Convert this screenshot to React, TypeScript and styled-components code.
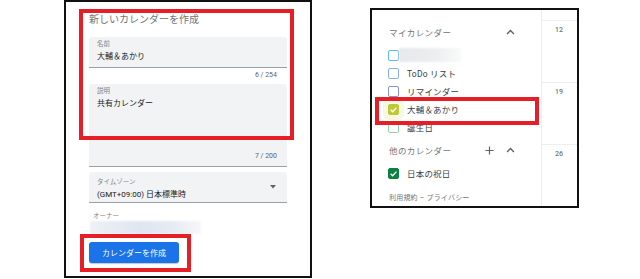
import * as React from 'react'
import styled, { createGlobalStyle } from 'styled-components'

const GlobalStyle = createGlobalStyle`
  html, body {
    margin: 0;
    padding: 0;
    background: #fff;
  }
  body {
    font-family: Roboto, "Noto Sans CJK JP", sans-serif;
    color: #3c4043;
  }
`

export const Stage = styled.div`
  width: 640px;
  height: 279px;
  box-sizing: border-box;
  padding-left: 64px;
  display: flex;
  align-items: flex-start;
  overflow: hidden;
`

export const FormPanel = styled.div`
  position: relative;
  width: 248px;
  height: 278px;
  box-sizing: border-box;
  border: 2px solid #111;
  padding: 11px 0 0 23px;
`

export const Title = styled.div`
  font-size: 10px;
  line-height: 14px;
  color: #70757a;
  margin-bottom: 10px;
`

export const Form = styled.div`
  width: 198px;
  display: flex;
  flex-direction: column;
`

export const Field = styled.div<{ $h: number; $pt?: number; $mt?: number }>`
  height: ${p => p.$h}px;
  margin-top: ${p => p.$mt ?? 0}px;
  box-sizing: border-box;
  background: #f1f3f4;
  border-radius: 3px 3px 0 0;
  border-bottom: 1px solid #9aa0a6;
  padding: ${p => p.$pt ?? 3}px 8px 0;
  display: flex;
  flex-direction: column;
`

export const FieldLabel = styled.div<{ $mt?: number }>`
  font-size: 6.5px;
  line-height: 8px;
  margin-top: ${p => p.$mt ?? 0}px;
  color: #80868b;
`

export const FieldValue = styled.div`
  font-size: 8px;
  line-height: 11px;
  margin-top: 3px;
  color: #202124;
`

export const Counter = styled.div<{ $inside?: boolean }>`
  font-size: 7px;
  line-height: 8px;
  color: #5f6368;
  text-align: right;
  padding-right: ${p => (p.$inside ? 2 : 10)}px;
  margin-top: ${p => (p.$inside ? 'auto' : '3px')};
  margin-bottom: ${p => (p.$inside ? '6px' : '5px')};
`

export const SelectRow = styled.div`
  display: flex;
  align-items: center;
  justify-content: space-between;
  height: 100%;
  padding-right: 3px;
`

export const OwnerLabel = styled.div`
  font-size: 6.5px;
  line-height: 8px;
  color: #80868b;
  margin: 9px 0 0 4px;
`

export const Blur = styled.div<{ $w: number; $h: number; $bg: string; $ml?: number; $mt?: number }>`
  width: ${p => p.$w}px;
  height: ${p => p.$h}px;
  margin-left: ${p => p.$ml ?? 0}px;
  margin-top: ${p => p.$mt ?? 0}px;
  background: ${p => p.$bg};
  filter: blur(1px);
`

export const PrimaryButton = styled.button`
  margin-top: 8px;
  width: 90px;
  height: 21px;
  border: none;
  border-radius: 3px;
  background: #1a73e8;
  color: #fff;
  font-family: Roboto, "Noto Sans CJK JP", sans-serif;
  font-size: 8px;
  padding: 0;
  box-shadow: 0 1px 1px rgba(60, 64, 67, 0.3);
`

export const Highlight = styled.div<{ $l: number; $t: number; $w: number; $h: number }>`
  position: absolute;
  left: ${p => p.$l}px;
  top: ${p => p.$t}px;
  width: ${p => p.$w}px;
  height: ${p => p.$h}px;
  box-sizing: border-box;
  border: 4px solid #e61e25;
  pointer-events: none;
`

export const SidePanel = styled.div`
  position: relative;
  margin: 8px 0 0 58px;
  width: 209px;
  height: 200px;
  box-sizing: border-box;
  border: 2px solid #111;
  display: flex;
`

export const Sidebar = styled.div`
  width: 170px;
  box-sizing: border-box;
  border-right: 1px solid #eceef0;
  padding: 10px 0 0 16px;
  display: flex;
  flex-direction: column;
`

export const SectionHead = styled.div<{ $mt?: number }>`
  height: 24px;
  margin-top: ${p => p.$mt ?? 0}px;
  display: flex;
  align-items: center;
  padding: 0 26px 0 1px;
  font-size: 8.5px;
  letter-spacing: 0.4px;
  color: #70757a;
`

export const HeadText = styled.span`
  flex: 1;
`

export const HeadIcons = styled.div`
  display: flex;
  align-items: center;
  gap: 12px;
`

export const List = styled.div<{ $mt?: number }>`
  margin-top: ${p => p.$mt ?? 0}px;
  display: flex;
  flex-direction: column;
`

export const Row = styled.div`
  height: 18px;
  display: flex;
  align-items: center;
  gap: 8px;
  font-size: 8.5px;
  letter-spacing: 0.2px;
  color: #3c4043;
`

export const Box = styled.span<{ $color: string; $checked?: boolean; $halo?: boolean }>`
  width: 11px;
  height: 11px;
  box-sizing: border-box;
  border-radius: 2px;
  flex: none;
  border: 1.5px solid ${p => p.$color};
  background: ${p => (p.$checked ? p.$color : 'transparent')};
  display: flex;
  align-items: center;
  justify-content: center;
  box-shadow: ${p => (p.$halo ? '0 0 0 5px rgba(192, 202, 51, 0.14)' : 'none')};
`

export const Footer = styled.div`
  margin-top: 11px;
  padding-left: 1px;
  font-size: 7px;
  line-height: 10px;
  letter-spacing: 0.2px;
  color: #70757a;
`

export const Month = styled.div`
  flex: 1;
  padding-top: 10px;
  display: flex;
  flex-direction: column;
`

export const Cell = styled.div`
  height: 62px;
  box-sizing: border-box;
  border-top: 1px solid #eceef0;
  padding: 5px 0 0 13px;
  font-size: 7px;
  line-height: 9px;
  font-weight: 500;
  color: #70757a;
`

const Check = () => (
  <svg width="9" height="9" viewBox="0 0 12 12">
    <path d="M2.2 6.3 L4.9 8.9 L9.9 3.5" fill="none" stroke="#fff" strokeWidth="1.8" />
  </svg>
)

const ChevronUp = () => (
  <svg width="9" height="6" viewBox="0 0 10 6">
    <polyline points="1.2,5.2 5,1.4 8.8,5.2" fill="none" stroke="#5f6368" strokeWidth="1.6" />
  </svg>
)

const Plus = () => (
  <svg width="9" height="9" viewBox="0 0 10 10">
    <path d="M5 0.5 V9.5 M0.5 5 H9.5" stroke="#5f6368" strokeWidth="1.3" />
  </svg>
)

const Caret = () => (
  <svg width="6" height="4" viewBox="0 0 6 4">
    <polygon points="0,0 6,0 3,3.5" fill="#5f6368" />
  </svg>
)

const myCalendars = [
  { color: '#5bbcf0', label: '', blur: true },
  { color: '#88aef2', label: 'ToDo リスト' },
  { color: '#8a92d6', label: 'リマインダー' },
  { color: '#bfc936', label: '大輔＆あかり', checked: true, halo: true },
  { color: '#8fd3ad', label: '誕生日' },
]

export default function App() {
  return (
    <>
      <GlobalStyle />
      <Stage>
        <FormPanel>
          <Title>新しいカレンダーを作成</Title>
          <Form>
            <Field $h={31}>
              <FieldLabel>名前</FieldLabel>
              <FieldValue>大輔＆あかり</FieldValue>
            </Field>
            <Counter>6 / 254</Counter>
            <Field $h={83}>
              <FieldLabel>説明</FieldLabel>
              <FieldValue>共有カレンダー</FieldValue>
              <Counter $inside>7 / 200</Counter>
            </Field>
            <Field $h={31} $pt={0} $mt={5}>
              <SelectRow>
                <div>
                  <FieldLabel $mt={4}>タイムゾーン</FieldLabel>
                  <FieldValue>(GMT+09:00) 日本標準時</FieldValue>
                </div>
                <Caret />
              </SelectRow>
            </Field>
            <OwnerLabel>オーナー</OwnerLabel>
            <Blur
              $w={111}
              $h={13}
              $ml={1}
              $mt={1}
              $bg="linear-gradient(90deg, #eef0f4 0%, #dfe6f2 45%, #e6ebf3 75%, #f6f7f9 100%)"
            />
            <PrimaryButton>カレンダーを作成</PrimaryButton>
          </Form>
          <Highlight $l={13} $t={7} $w={215} $h={131} />
          <Highlight $l={14} $t={232} $w={111} $h={38} />
        </FormPanel>

        <SidePanel>
          <Sidebar>
            <SectionHead>
              <HeadText>マイカレンダー</HeadText>
              <ChevronUp />
            </SectionHead>
            <List $mt={2}>
              {myCalendars.map((c, i) => (
                <Row key={i}>
                  <Box $color={c.color} $checked={c.checked} $halo={c.halo}>
                    {c.checked && <Check />}
                  </Box>
                  {c.blur ? (
                    <Blur
                      $w={62}
                      $h={14}
                      $ml={-8}
                      $bg="linear-gradient(90deg, #e6e8eb 0%, #eceef0 60%, #fafafa 100%)"
                    />
                  ) : (
                    <span>{c.label}</span>
                  )}
                </Row>
              ))}
            </List>
            <SectionHead $mt={2}>
              <HeadText>他のカレンダー</HeadText>
              <HeadIcons>
                <Plus />
                <ChevronUp />
              </HeadIcons>
            </SectionHead>
            <List $mt={2}>
              <Row>
                <Box $color="#0b8043" $checked>
                  <Check />
                </Box>
                <span>日本の祝日</span>
              </Row>
            </List>
            <Footer>利用規約 – プライバシー</Footer>
          </Sidebar>
          <Month>
            <Cell>12</Cell>
            <Cell>19</Cell>
            <Cell>26</Cell>
          </Month>
          <Highlight $l={3} $t={87} $w={164} $h={28} />
        </SidePanel>
      </Stage>
    </>
  )
}
